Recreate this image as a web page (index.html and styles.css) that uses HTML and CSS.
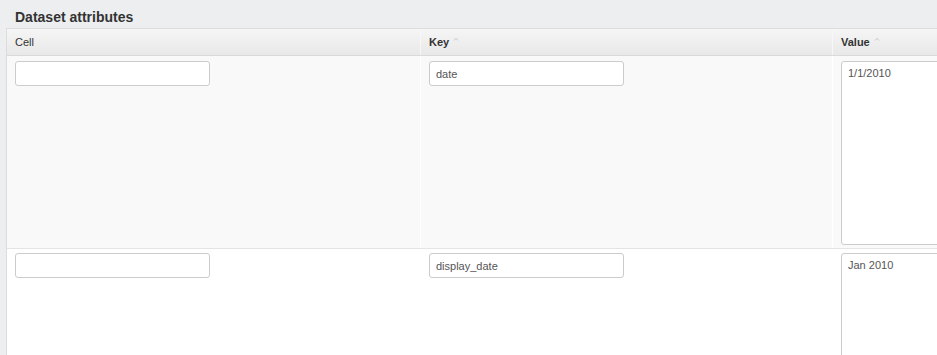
FILE: index.html
```html
<!DOCTYPE html>
<html>
<head>
<meta charset="utf-8">
<link rel="stylesheet" href="styles.css">
</head>
<body>
<div class="page">
  <h2 class="title">Dataset attributes</h2>
  <div class="table">
    <div class="row head">
      <div class="cell c1"><span class="plain">Cell</span></div>
      <div class="cell c2"><span class="sortable">Key</span><svg class="caret" width="6" height="4" viewBox="0 0 6 4"><polyline points="1,3.5 3,1.2 5,3.5" fill="none" stroke="#c8c8c8" stroke-width="1"/></svg></div>
      <div class="cell c3"><span class="sortable">Value</span><svg class="caret" width="6" height="4" viewBox="0 0 6 4"><polyline points="1,3.5 3,1.2 5,3.5" fill="none" stroke="#c8c8c8" stroke-width="1"/></svg></div>
    </div>
    <div class="row odd">
      <div class="cell c1"><input class="field" type="text" value=""></div>
      <div class="cell c2"><input class="field" type="text" value="date"></div>
      <div class="cell c3"><textarea class="area">1/1/2010</textarea></div>
    </div>
    <div class="row even">
      <div class="cell c1"><input class="field" type="text" value=""></div>
      <div class="cell c2"><input class="field" type="text" value="display_date"></div>
      <div class="cell c3"><textarea class="area">Jan 2010</textarea></div>
    </div>
  </div>
</div>
</body>
</html>
```
FILE: styles.css
```css
html, body {
  margin: 0;
  padding: 0;
  overflow: hidden;
  background: #eceef0;
  font-family: "Liberation Sans", Arial, sans-serif;
  color: #333;
}

.page {
  box-sizing: border-box;
  padding-left: 6px;
  width: 100vw;
  height: 100vh;
  overflow: hidden;
}

.title {
  margin: 0 0 2px 9px;
  padding-top: 9px;
  font-size: 14px;
  line-height: 17px;
  font-weight: bold;
  color: #333;
}

.table {
  width: 1400px;
  border: 1px solid #dcdcdc;
  border-right: none;
  background: #fff;
}

.row {
  display: grid;
  grid-template-columns: 414px 412px 574px;
}

.head {
  background: linear-gradient(#f5f5f5, #e8e8e8);
  border-bottom: 1px solid #dadada;
  height: 26px;
}

.head .cell {
  display: flex;
  align-items: center;
  font-size: 11px;
  line-height: 26px;
  color: #333;
  padding: 0 8px;
}

.head .cell.c1, .head .cell.c2 {
  border-right: 1px solid #f7f7f7;
}

.plain {
  font-weight: normal;
  color: #333;
}

.sortable {
  font-weight: bold;
  color: #333;
}

.caret {
  margin-left: 4px;
  margin-top: -6px;
}

.cell {
  box-sizing: border-box;
  padding: 5px 8px 3px 8px;
}

.odd {
  background: #f9f9f9;
  border-bottom: 1px solid #e4e4e4;
}

.odd .cell.c1, .odd .cell.c2 {
  border-right: 1px solid #ffffff;
}

.even {
  background: #fff;
  height: 120px;
}

.even .cell {
  padding-top: 4px;
}

.field {
  display: block;
  box-sizing: border-box;
  width: 195px;
  height: 25px;
  margin: 0;
  padding: 0 6px;
  border: 1px solid #cccccc;
  border-radius: 3px;
  background: #fff;
  font-family: "Liberation Sans", Arial, sans-serif;
  font-size: 11px;
  color: #555;
  outline: none;
}

.area {
  display: block;
  box-sizing: border-box;
  width: 300px;
  height: 184px;
  margin: 0;
  padding: 4px 6px;
  border: 1px solid #cccccc;
  border-radius: 3px;
  background: #fff;
  font-family: "Liberation Sans", Arial, sans-serif;
  font-size: 11px;
  line-height: 14px;
  color: #555;
  resize: none;
  outline: none;
}
```
